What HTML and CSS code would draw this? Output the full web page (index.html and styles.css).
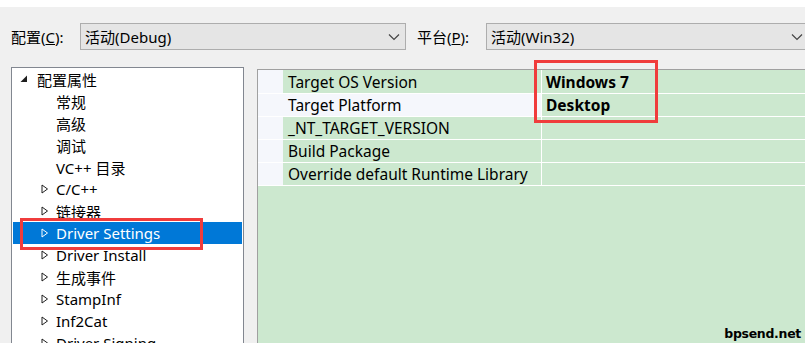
FILE: index.html
```html
<!DOCTYPE html>
<html lang="zh-CN">
<head>
    <meta charset="UTF-8">
    <title>属性页</title>
    <link rel="stylesheet" href="styles.css">
</head>
<body>
    <div class="topstrip"></div>
    <div class="toolbar">
        <label class="lbl">配置(<u>C</u>):</label>
        <div class="combo combo-config">
            <span>活动(Debug)</span>
            <svg class="chev" width="12" height="8" viewBox="0 0 12 8"><path d="M1 1.5 L6 6.5 L11 1.5" fill="none" stroke="#444" stroke-width="1.2"/></svg>
        </div>
        <label class="lbl lbl-platform">平台(<u>P</u>):</label>
        <div class="combo combo-platform">
            <span>活动(Win32)</span>
            <svg class="chev" width="12" height="8" viewBox="0 0 12 8"><path d="M1 1.5 L6 6.5 L11 1.5" fill="none" stroke="#444" stroke-width="1.2"/></svg>
        </div>
    </div>

    <div class="main">
        <div class="tree">
            <div class="node root">
                <svg class="tri" width="8" height="8" viewBox="0 0 8 8"><path d="M7 0.5 L7 7 L0.5 7 Z" fill="#1e1e1e"/></svg>
                <span>配置属性</span>
            </div>
            <div class="node leaf"><span>常规</span></div>
            <div class="node leaf"><span>高级</span></div>
            <div class="node leaf"><span>调试</span></div>
            <div class="node leaf"><span>VC++ 目录</span></div>
            <div class="node child"><svg class="tri" width="8" height="10" viewBox="0 0 8 10"><path d="M1 1 L6.5 5 L1 9 Z" fill="none" stroke="#1e1e1e"/></svg><span>C/C++</span></div>
            <div class="node child"><svg class="tri" width="8" height="10" viewBox="0 0 8 10"><path d="M1 1 L6.5 5 L1 9 Z" fill="none" stroke="#1e1e1e"/></svg><span>链接器</span></div>
            <div class="node child selected"><svg class="tri" width="8" height="10" viewBox="0 0 8 10"><path d="M1 1 L6.5 5 L1 9 Z" fill="none" stroke="#fff"/></svg><span>Driver Settings</span>
                <div class="mark mark-tree"></div>
            </div>
            <div class="node child"><svg class="tri" width="8" height="10" viewBox="0 0 8 10"><path d="M1 1 L6.5 5 L1 9 Z" fill="none" stroke="#1e1e1e"/></svg><span>Driver Install</span></div>
            <div class="node child"><svg class="tri" width="8" height="10" viewBox="0 0 8 10"><path d="M1 1 L6.5 5 L1 9 Z" fill="none" stroke="#1e1e1e"/></svg><span>生成事件</span></div>
            <div class="node child"><svg class="tri" width="8" height="10" viewBox="0 0 8 10"><path d="M1 1 L6.5 5 L1 9 Z" fill="none" stroke="#1e1e1e"/></svg><span>StampInf</span></div>
            <div class="node child"><svg class="tri" width="8" height="10" viewBox="0 0 8 10"><path d="M1 1 L6.5 5 L1 9 Z" fill="none" stroke="#1e1e1e"/></svg><span>Inf2Cat</span></div>
            <div class="node child"><svg class="tri" width="8" height="10" viewBox="0 0 8 10"><path d="M1 1 L6.5 5 L1 9 Z" fill="none" stroke="#1e1e1e"/></svg><span>Driver Signing</span></div>
        </div>

        <div class="grid">
            <div class="row">
                <div class="name">Target OS Version</div>
                <div class="value">Windows 7</div>
            </div>
            <div class="row">
                <div class="name plain">Target Platform</div>
                <div class="value">Desktop</div>
            </div>
            <div class="row">
                <div class="name">_NT_TARGET_VERSION</div>
                <div class="value"></div>
            </div>
            <div class="row">
                <div class="name">Build Package</div>
                <div class="value"></div>
            </div>
            <div class="row">
                <div class="name">Override default Runtime Library</div>
                <div class="value"></div>
            </div>
            <div class="filler"></div>
            <div class="mark mark-grid"></div>
            <div class="watermark">bpsend.net</div>
        </div>
    </div>
</body>
</html>
```

FILE: styles.css
```css
html, body {
    margin: 0;
    height: 100%;
    overflow: hidden;
}
body {
    background: #f0f0f0;
    font-family: "Noto Sans", "Noto Sans CJK SC", sans-serif;
    font-size: 15px;
    color: #000;
}
.topstrip {
    height: 7px;
    background: #fff;
}
.toolbar {
    display: flex;
    align-items: center;
    padding: 16px 0 0 11px;
    height: 27px;
}
.lbl {
    width: 69px;
    white-space: nowrap;
}
.lbl u {
    text-decoration-thickness: 1px;
}
.lbl-platform {
    margin-left: 11px;
}
.combo {
    box-sizing: border-box;
    height: 27px;
    background: #e5e5e5;
    border: 1px solid #adadad;
    display: flex;
    align-items: center;
    padding-left: 4px;
    position: relative;
}
.combo-config {
    width: 326px;
}
.combo-platform {
    flex: 1;
    margin-right: -14px;
}
.combo span {
    flex: 1;
}
.chev {
    margin-right: 5px;
}
.combo-platform .chev {
    margin-right: 15px;
}
.main {
    display: flex;
    margin-top: 17px;
    padding-left: 11px;
    height: 280px;
}
.tree {
    width: 229px;
    background: #fff;
    border: 1px solid #828790;
    border-bottom: none;
    padding: 0 1px;
    box-sizing: content-box;
}
.node {
    height: 22px;
    display: flex;
    align-items: center;
    white-space: nowrap;
    position: relative;
}
.node.root {
    padding-left: 7px;
}
.node.root .tri {
    margin-right: 9px;
}
.node.leaf {
    padding-left: 43px;
}
.node.child {
    padding-left: 28px;
}
.node.child .tri {
    margin-right: 7px;
}
.node.selected {
    background: #0078d7;
    color: #fff;
}
.grid {
    flex: 1;
    margin-left: 13px;
    margin-top: 2px;
    padding-top: 1px;
    border-top: 1px solid #a0a0a0;
    border-left: 1px solid #a0a0a0;
    background: #cce8cf;
    display: flex;
    flex-direction: column;
    position: relative;
    font-size: 15.5px;
}
.row {
    display: flex;
    height: 22px;
    border-bottom: 1px solid #fff;
    background: #f5f7fc;
    padding-left: 25px;
}
.row:first-child {
    margin-top: -1px;
    height: 23px;
}
.name {
    width: 253px;
    background: #cce8cf;
    padding-left: 5px;
    line-height: 22px;
    border-right: 1px solid #fff;
    white-space: nowrap;
}
.row:first-child .name,
.row:first-child .value {
    line-height: 24px;
}
.name.plain {
    background: #f5f7fc;
}
.value {
    flex: 1;
    background: #cce8cf;
    padding-left: 4px;
    line-height: 22px;
    font-weight: bold;
}
.filler {
    flex: 1;
}
.mark {
    position: absolute;
    border: 3px solid #f03c3c;
    box-sizing: border-box;
}
.mark-tree {
    left: 7px;
    top: -4px;
    width: 183px;
    height: 32px;
}
.mark-grid {
    left: 276px;
    top: -10px;
    width: 124px;
    height: 63px;
}
.watermark {
    position: absolute;
    right: 4px;
    bottom: 6px;
    font-family: "DejaVu Sans", sans-serif;
    font-weight: bold;
    font-size: 12.5px;
    letter-spacing: -0.3px;
}
```
